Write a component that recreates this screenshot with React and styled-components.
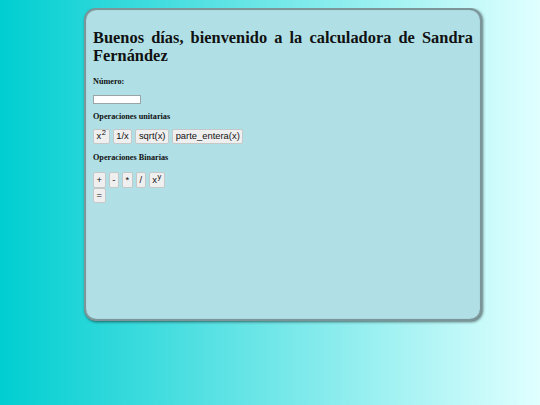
import React from "react";
import styled, { createGlobalStyle } from "styled-components";

const Global = createGlobalStyle`
  html, body { height: 100%; }
  html {
    background: linear-gradient(to right, #00ced1 0%, #e0ffff 100%);
  }
  body {
    margin: 8px;
    font-family: "Liberation Serif", "Times New Roman", serif;
    color: #111;
  }
`;

const Panel = styled.main`
  box-sizing: border-box;
  width: 398px;
  height: 313px;
  margin-left: 76px;
  padding: 1px 7px;
  background: #b0e0e6;
  border: 2px solid #7c9599;
  border-radius: 12px;
  box-shadow: 1px 1px 3px rgba(0, 0, 0, 0.55), inset 0 0 1px rgba(0,0,0,0.3);
`;

const Title = styled.h2`
  margin: 18px 0 11px;
  font-size: 16.4px;
  font-weight: bold;
  line-height: 18.4px;
  text-align: justify;
`;

const Label = styled.div`
  margin: ${(p) => p.$top || 0}px 0 0;
  font-size: 8.2px;
  font-weight: bold;
  line-height: 10px;
`;

const NumberInput = styled.input`
  display: block;
  box-sizing: border-box;
  width: 48px;
  height: 9px;
  margin: 8px 0 0;
  padding: 0;
  background: #fff;
  border: 1px solid #9aa5a8;
`;

const Row = styled.div`
  display: flex;
  align-items: baseline;
  gap: 3px;
  margin-top: ${(p) => p.$top || 0}px;
`;

const OpButton = styled.button`
  font-family: "Liberation Sans", Arial, sans-serif;
  font-size: 9.4px;
  line-height: 10.5px;
  padding: 1.5px 2.6px;
  color: #111;
  background: #efefef;
  border: 1px solid #c4c8c9;
  border-radius: 2px;
  sup {
    font-size: 7.6px;
    line-height: 0;
    margin-left: 0.5px;
  }
`;

export default function App() {
  return (
    <>
      <Global />
      <Panel>
        <Title>Buenos días, bienvenido a la calculadora de Sandra Fernández</Title>
        <Label>Número:</Label>
        <NumberInput type="text" />
        <Label $top={8}>Operaciones unitarias</Label>
        <Row $top={7}>
          <OpButton>x<sup>2</sup></OpButton>
          <OpButton>1/x</OpButton>
          <OpButton>sqrt(x)</OpButton>
          <OpButton>parte_entera(x)</OpButton>
        </Row>
        <Label $top={9}>Operaciones Binarias</Label>
        <Row $top={9}>
          <OpButton>+</OpButton>
          <OpButton>-</OpButton>
          <OpButton>*</OpButton>
          <OpButton>/</OpButton>
          <OpButton>x<sup>y</sup></OpButton>
        </Row>
        <Row>
          <OpButton>=</OpButton>
        </Row>
      </Panel>
    </>
  );
}
